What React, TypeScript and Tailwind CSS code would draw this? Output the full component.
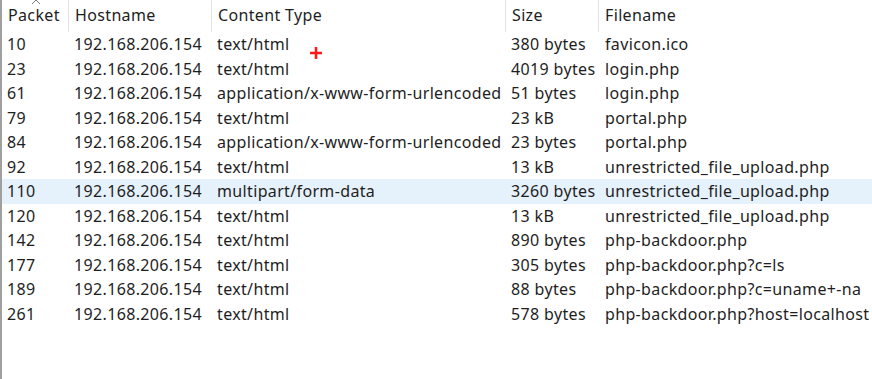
const rows = [
  ["10", "192.168.206.154", "text/html", "380 bytes", "favicon.ico"],
  ["23", "192.168.206.154", "text/html", "4019 bytes", "login.php"],
  ["61", "192.168.206.154", "application/x-www-form-urlencoded", "51 bytes", "login.php"],
  ["79", "192.168.206.154", "text/html", "23 kB", "portal.php"],
  ["84", "192.168.206.154", "application/x-www-form-urlencoded", "23 bytes", "portal.php"],
  ["92", "192.168.206.154", "text/html", "13 kB", "unrestricted_file_upload.php"],
  ["110", "192.168.206.154", "multipart/form-data", "3260 bytes", "unrestricted_file_upload.php"],
  ["120", "192.168.206.154", "text/html", "13 kB", "unrestricted_file_upload.php"],
  ["142", "192.168.206.154", "text/html", "890 bytes", "php-backdoor.php"],
  ["177", "192.168.206.154", "text/html", "305 bytes", "php-backdoor.php?c=ls"],
  ["189", "192.168.206.154", "text/html", "88 bytes", "php-backdoor.php?c=uname+-na"],
  ["261", "192.168.206.154", "text/html", "578 bytes", "php-backdoor.php?host=localhost"],
];

const cols = "grid grid-cols-[66px_143px_294px_93px_1fr]";

export default function App() {
  return (
    <div
      className="w-[872px] h-[379px] bg-white overflow-hidden border-l-2 border-[#a0a0a0] text-[16px] tracking-[0.35px] text-[#1e1e1e] relative"
      style={{ fontFamily: '"Noto Sans", "Open Sans", sans-serif' }}
    >
      {/* header */}
      <div className={`${cols} h-8 relative`}>
        <div className="pl-[6px] pt-[3px] relative">
          Packet
          <svg className="absolute left-[29px] -top-[1px]" width="10" height="6" viewBox="0 0 10 6">
            <path d="M1 5 L5 1 L9 5" fill="none" stroke="#7a7a7a" strokeWidth="1" />
          </svg>
        </div>
        <div className="pl-[6px] pt-[3px] border-l border-[#e3e3e3]">Hostname</div>
        <div className="pl-[6px] pt-[3px] border-l border-[#e3e3e3]">Content Type</div>
        <div className="pl-[6px] pt-[3px] border-l border-[#e3e3e3]">Size</div>
        <div className="pl-[6px] pt-[3px] border-l border-[#e3e3e3]">Filename</div>
      </div>

      {rows.map((r, i) => (
        <div
          key={r[0]}
          className={`${cols} h-[24.5px] items-center whitespace-nowrap ${i === 6 ? "bg-[#e5f1fb]" : ""}`}
        >
          <div className="pl-[5px]">{r[0]}</div>
          <div className="pl-[6px]">{r[1]}</div>
          <div className="pl-[6px]">{r[2]}</div>
          <div className="pl-[6px]">{r[3]}</div>
          <div className="pl-[7px]">{r[4]}</div>
        </div>
      ))}

      {/* red cursor cross */}
      <svg className="absolute left-[307px] top-[46px]" width="14" height="14" viewBox="0 0 14 14">
        <path d="M7 1 V13 M1 7 H13" stroke="#ff1a1a" strokeWidth="2.5" />
      </svg>
    </div>
  );
}
